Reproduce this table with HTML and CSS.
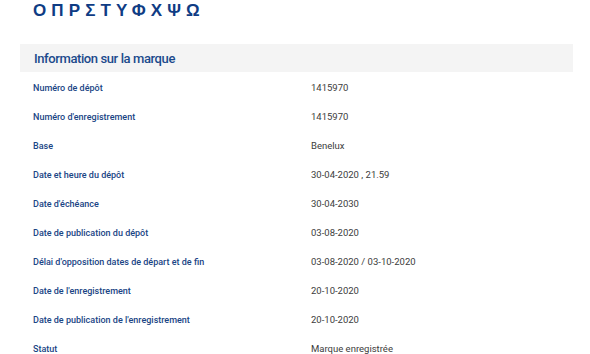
FILE: index.html
```html
<!DOCTYPE html>
<html lang="fr">
<head>
<meta charset="utf-8">
<title>Information sur la marque</title>
<link rel="stylesheet" href="styles.css">
</head>
<body>
<main class="page">
  <h1 class="mark-name">ΟΠΡΣΤΥΦΧΨΩ</h1>
  <section class="info">
    <h2 class="info-title">Information sur la marque</h2>
    <dl class="info-list">
      <div class="row"><dt>Numéro de dépôt</dt><dd>1415970</dd></div>
      <div class="row"><dt>Numéro d'enregistrement</dt><dd>1415970</dd></div>
      <div class="row"><dt>Base</dt><dd>Benelux</dd></div>
      <div class="row"><dt>Date et heure du dépôt</dt><dd>30-04-2020 , 21.59</dd></div>
      <div class="row"><dt>Date d'échéance</dt><dd>30-04-2030</dd></div>
      <div class="row"><dt>Date de publication du dépôt</dt><dd>03-08-2020</dd></div>
      <div class="row"><dt>Délai d'opposition dates de départ et de fin</dt><dd>03-08-2020 / 03-10-2020</dd></div>
      <div class="row"><dt>Date de l'enregistrement</dt><dd>20-10-2020</dd></div>
      <div class="row"><dt>Date de publication de l'enregistrement</dt><dd>20-10-2020</dd></div>
      <div class="row"><dt>Statut</dt><dd>Marque enregistrée</dd></div>
    </dl>
  </section>
</main>
</body>
</html>
```
FILE: styles.css
```css
html, body {
  margin: 0;
  padding: 0;
  background: #ffffff;
}

body {
  font-family: Roboto, "Liberation Sans", sans-serif;
  color: #3a3a3a;
}

.page {
  padding: 0 17px 0 20px;
}

.mark-name {
  margin: 0;
  padding: 2px 0 0 13px;
  font-family: "Liberation Sans", Arial, sans-serif;
  font-weight: 700;
  font-size: 17px;
  line-height: 18px;
  letter-spacing: 5.1px;
  color: #0f3c84;
}

.info {
  margin-top: 24px;
}

.info-title {
  margin: 0;
  height: 28px;
  display: flex;
  align-items: center;
  padding-left: 14px;
  background: #f4f4f4;
  font-size: 13px;
  font-weight: 500;
  letter-spacing: -0.4px;
  color: #1b4a8c;
}

.info-list {
  margin: 1px 0 0;
  padding: 0;
}

.row {
  display: grid;
  grid-template-columns: 278px 1fr;
  height: 29px;
  align-items: center;
  padding-left: 13px;
}

.row dt {
  font-size: 9px;
  font-weight: 500;
  color: #1a4585;
}

.row dd {
  margin: 0;
  font-size: 9.5px;
  color: #3c3c3c;
}
```
